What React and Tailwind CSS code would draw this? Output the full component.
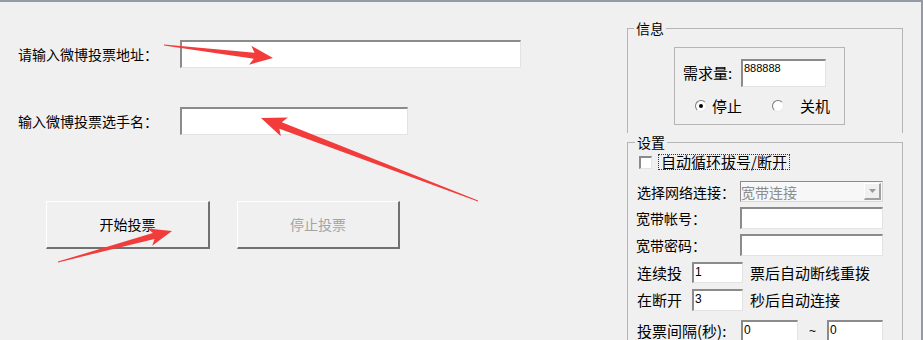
import React from "react";

const font = "font-['Noto_Sans_CJK_SC',sans-serif]";
const sunken =
  "bg-white border-t-2 border-l-2 border-r border-b border-t-[#8b8b8b] border-l-[#8b8b8b] border-r-[#e3e3e3] border-b-[#e3e3e3]";
const raised =
  "bg-[#f0f0f0] border-t border-l border-t-white border-l-white border-r-2 border-b-2 border-r-[#707070] border-b-[#707070]";
const num = "font-['Liberation_Sans',sans-serif] text-[12px] leading-[16px] pl-[1px]";

// tapered red annotation arrow, tail -> tip
function arrowPoints([tx, ty], [hx, hy], headLen, headW, shaftW) {
  const dx = hx - tx;
  const dy = hy - ty;
  const len = Math.hypot(dx, dy);
  const ux = dx / len;
  const uy = dy / len;
  const px = -uy;
  const py = ux;
  const bx = hx - ux * headLen;
  const by = hy - uy * headLen;
  const jx = bx + ux * 4;
  const jy = by + uy * 4;
  const pts = [
    [tx + px * 0.4, ty + py * 0.4],
    [jx + px * shaftW, jy + py * shaftW],
    [bx + px * headW, by + py * headW],
    [hx, hy],
    [bx - px * headW, by - py * headW],
    [jx - px * shaftW, jy - py * shaftW],
    [tx - px * 0.4, ty - py * 0.4],
  ];
  return pts.map((p) => p.map((v) => v.toFixed(1)).join(",")).join(" ");
}

function Radio({ checked }) {
  return (
    <span className="w-[12px] h-[12px] rounded-full bg-white border border-t-[#7a7a7a] border-l-[#7a7a7a] border-r-[#e8e8e8] border-b-[#e8e8e8] flex items-center justify-center">
      {checked && <span className="w-[4px] h-[4px] rounded-full bg-black" />}
    </span>
  );
}

export default function App() {
  return (
    <div
      className={`relative w-[923px] h-[340px] overflow-hidden bg-[#f0f0f0] border-t-2 border-r-2 border-[#939ba6] flex text-black whitespace-nowrap ${font}`}
    >
      {/* left side */}
      <div className="w-[627px] shrink-0 pl-[18px] pt-[38px]">
        <div className="flex items-center h-[28px]">
          <span className="w-[162px] shrink-0 text-[14px] leading-[20px]">请输入微博投票地址：</span>
          <div className={`w-[341px] h-[28px] ${sunken}`} />
        </div>
        <div className="flex items-center h-[28px] mt-[39px]">
          <span className="w-[162px] shrink-0 text-[14px] leading-[20px]">输入微博投票选手名：</span>
          <div className={`w-[228px] h-[28px] ${sunken}`} />
        </div>
        <div className="flex mt-[66px] ml-[28px] gap-[27px]">
          <button className={`w-[164px] h-[48px] text-[14px] ${raised}`}>开始投票</button>
          <button className={`w-[163px] h-[48px] text-[14px] text-[#a3a3a3] ${raised}`}>
            停止投票
          </button>
        </div>
      </div>

      {/* right side */}
      <div className="w-[276px] shrink-0 text-[14px]">
        <fieldset className="mt-[16px] border-t border-l border-r border-[#b5b5b5] pb-[8px]">
          <legend className="ml-[6px] px-[2px] leading-[20px]">信息</legend>
          <div className="ml-[46px] mt-[9px] w-[171px] h-[78px] border border-[#b5b5b5] pt-[11px]">
            <div className="flex items-center h-[28px]">
              <span className="w-[66px] shrink-0 pl-[8px] leading-[20px] text-[15px]">需求量:</span>
              <div className={`w-[85px] h-[28px] ${sunken} font-['Liberation_Sans',sans-serif] text-[11px] leading-[14px] pl-[1px]`}>
                888888
              </div>
            </div>
            <div className="flex items-center h-[16px] mt-[11px]">
              <span className="ml-[20px]">
                <Radio checked />
              </span>
              <span className="ml-[5px] leading-[16px] text-[15px]">停止</span>
              <span className="ml-[30px]">
                <Radio />
              </span>
              <span className="ml-[16px] leading-[16px] text-[15px]">关机</span>
            </div>
          </div>
        </fieldset>

        <fieldset className="mt-[-1px] border-t border-l border-r border-[#b5b5b5] pb-[10px]">
          <legend className="ml-[7px] px-[2px] leading-[20px]">设置</legend>
          <div className="flex items-center h-[16px] mt-[2px] pl-[11px]">
            <span className={`w-[13px] h-[13px] shrink-0 ${sunken} border-t border-l`} />
            <span className="ml-[6px] border border-dotted border-[#333] leading-[14px] px-[2px] text-[15px]">
              自动循环拔号/断开
            </span>
          </div>

          <div className="flex items-center h-[21px] mt-[11px] pl-[9px]">
            <span className="w-[103px] shrink-0 leading-[20px]">选择网络连接：</span>
            <div className="w-[143px] h-[21px] bg-[#f7f7f7] border border-t-[#8b8b8b] border-l-[#8b8b8b] border-r-[#d8d8d8] border-b-[#d8d8d8] flex items-center justify-between">
              <span className="text-[#8d8d8d] leading-[18px]">宽带连接</span>
              <span className={`w-[17px] h-[17px] mr-[1px] flex items-center justify-center ${raised} border-r border-b border-r-[#a0a0a0] border-b-[#a0a0a0]`}>
                <svg width="7" height="4" viewBox="0 0 7 4">
                  <path d="M0 0h7L3.5 4z" fill="#9a9a9a" />
                </svg>
              </span>
            </div>
          </div>

          <div className="flex items-center h-[22px] mt-[5px] pl-[8px]">
            <span className="w-[104px] shrink-0 leading-[20px]">宽带帐号：</span>
            <div className={`w-[143px] h-[22px] ${sunken}`} />
          </div>
          <div className="flex items-center h-[22px] mt-[5px] pl-[8px]">
            <span className="w-[104px] shrink-0 leading-[20px]">宽带密码：</span>
            <div className={`w-[143px] h-[22px] ${sunken}`} />
          </div>

          <div className="flex items-center h-[21px] mt-[6px] pl-[9px]">
            <span className="w-[55px] shrink-0 leading-[20px] text-[15px]">连续投</span>
            <div className={`w-[51px] h-[21px] ${sunken} ${num}`}>1</div>
            <span className="ml-[7px] leading-[20px] text-[15px]">票后自动断线重拨</span>
          </div>
          <div className="flex items-center h-[22px] mt-[6px] pl-[9px]">
            <span className="w-[55px] shrink-0 leading-[20px] text-[15px]">在断开</span>
            <div className={`w-[51px] h-[22px] ${sunken} ${num}`}>3</div>
            <span className="ml-[7px] leading-[20px] text-[15px]">秒后自动连接</span>
          </div>

          <div className="flex items-center h-[21px] mt-[9px] pl-[9px]">
            <span className="w-[104px] shrink-0 leading-[20px] text-[15px]">投票间隔(秒):</span>
            <div className={`w-[57px] h-[21px] ${sunken} ${num}`}>0</div>
            <span className="w-[29px] text-center text-[12px] font-['Liberation_Sans',sans-serif]">~</span>
            <div className={`w-[56px] h-[21px] ${sunken} ${num}`}>0</div>
          </div>
        </fieldset>
      </div>

      {/* red annotation arrows drawn over the window */}
      <svg
        className="absolute left-0 top-[-2px] pointer-events-none"
        width="923"
        height="340"
        viewBox="0 0 923 340"
      >
        <polygon points={arrowPoints([164, 45], [273, 58], 23, 9.5, 3)} fill="#f23c3c" />
        <polygon points={arrowPoints([478, 201], [261, 118], 25, 10, 3.4)} fill="#f23c3c" />
        <polygon points={arrowPoints([58, 262], [172, 231], 23, 9, 3)} fill="#f23c3c" />
      </svg>
    </div>
  );
}
